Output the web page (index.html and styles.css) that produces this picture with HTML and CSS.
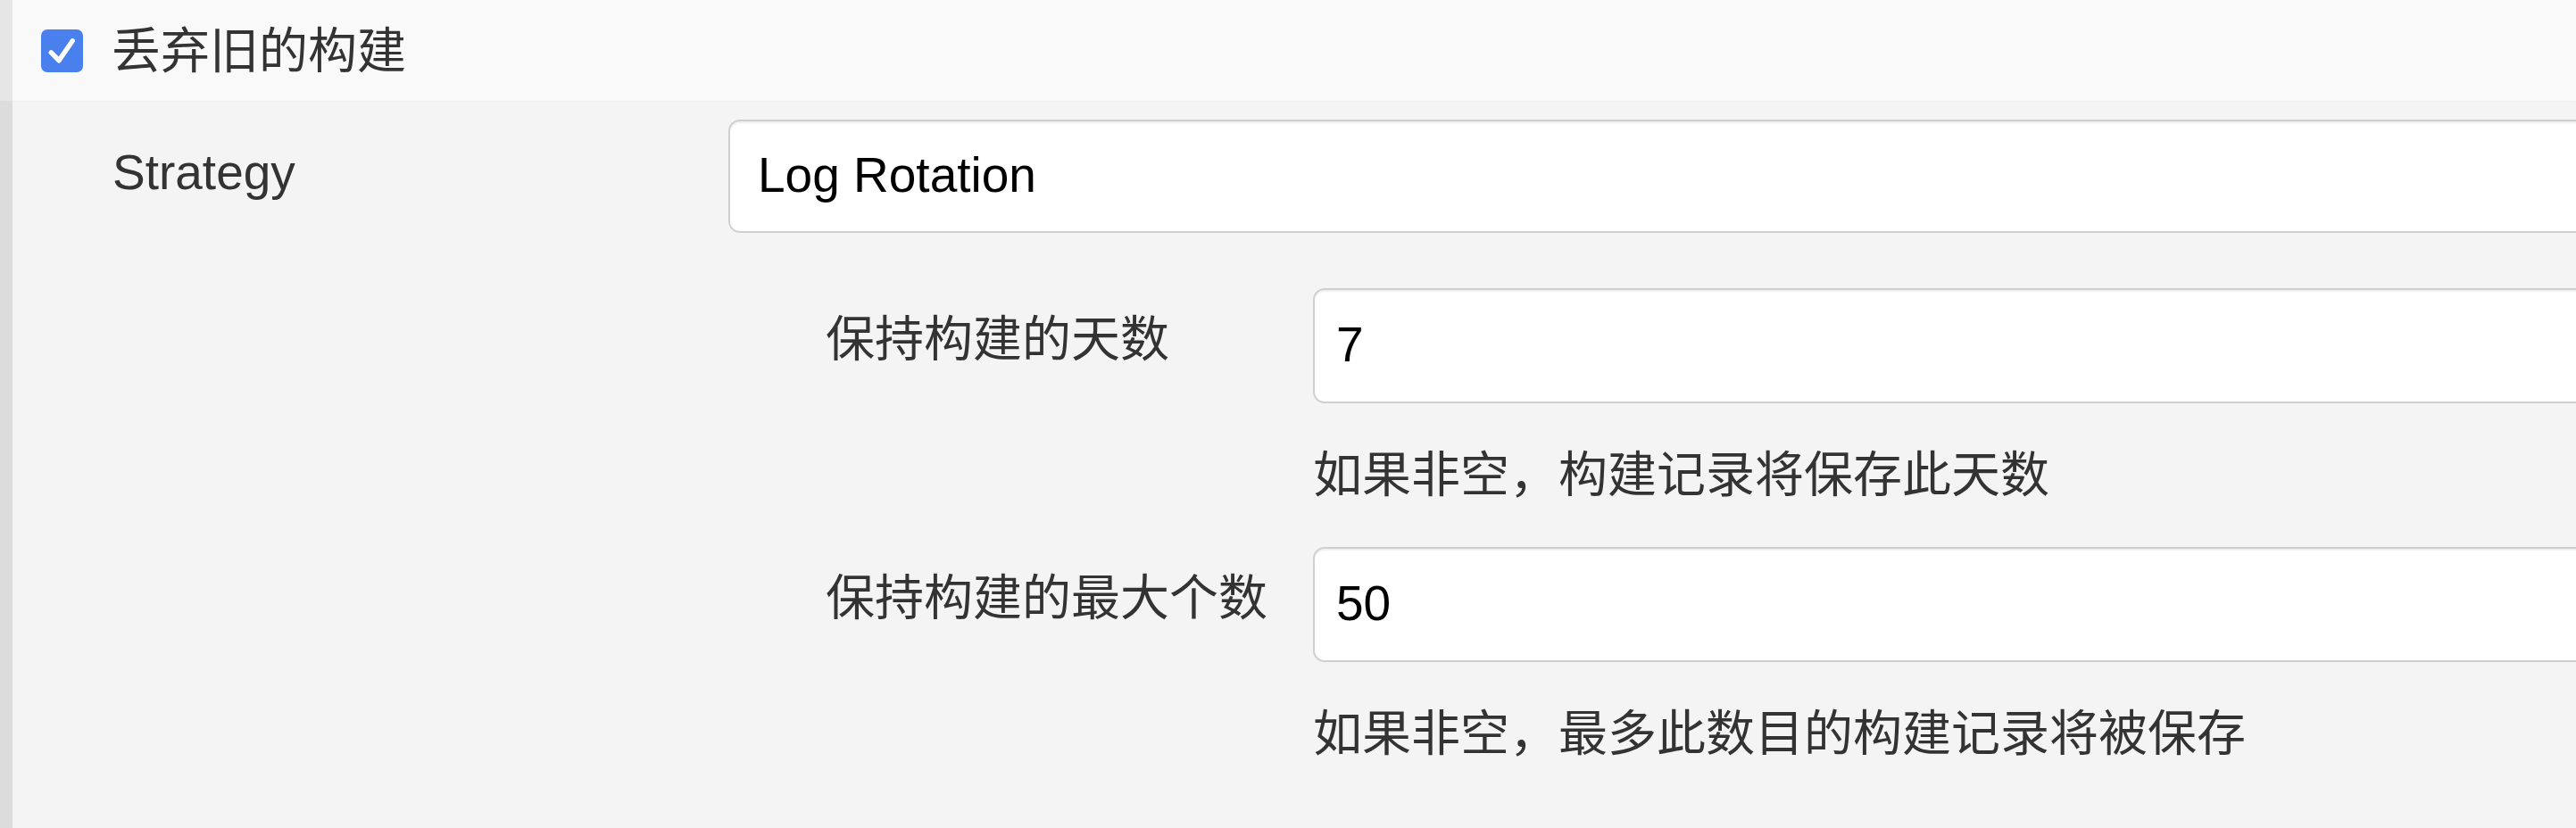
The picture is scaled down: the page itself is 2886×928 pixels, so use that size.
FILE: index.html
```html
<!DOCTYPE html>
<html lang="zh-CN">
<head>
<meta charset="utf-8">
<title>丢弃旧的构建</title>
<link rel="stylesheet" href="styles.css">
</head>
<body>
<div class="page">
  <div class="header">
    <span class="checkbox">
      <svg viewBox="0 0 48 48" width="47" height="48"><path d="M11.5 26 L20.5 35 L36 12.5" fill="none" stroke="#fff" stroke-width="5.5" stroke-linecap="round" stroke-linejoin="round"/></svg>
    </span>
    <span class="title">丢弃旧的构建</span>
  </div>
  <div class="body">
    <div class="row">
      <div class="label strategy">Strategy</div>
      <div class="select">Log Rotation</div>
    </div>
    <div class="nested">
      <div class="field">
        <div class="label sub">保持构建的天数</div>
        <div class="input">7</div>
      </div>
      <div class="help">如果非空，构建记录将保存此天数</div>
      <div class="field">
        <div class="label sub">保持构建的最大个数</div>
        <div class="input">50</div>
      </div>
      <div class="help">如果非空，最多此数目的构建记录将被保存</div>
    </div>
  </div>
</div>
</body>
</html>
```

FILE: styles.css
```css
html, body {
  margin: 0;
  padding: 0;
  width: 2886px;
  height: 928px;
  overflow: hidden;
  background: #f4f4f4;
}
.page {
  font-family: "Liberation Sans", "Noto Sans CJK SC", sans-serif;
  font-size: 55px;
  line-height: 66px;
  color: #333;
  width: 2886px;
  height: 928px;
  overflow: hidden;
}
.header {
  height: 113px;
  display: flex;
  align-items: center;
  background: #f9f9f9;
  border-left: 14px solid #e6e6e6;
  padding-left: 32px;
  box-shadow: 0 1px 2px rgba(0,0,0,0.03);
}
.checkbox {
  width: 47px;
  height: 48px;
  border-radius: 7px;
  background: #4a80ee;
  display: flex;
  align-items: center;
  justify-content: center;
  flex-shrink: 0;
}
.checkbox svg { display: block; }
.title {
  margin-left: 32px;
  color: #333;
  white-space: nowrap;
}
.body {
  border-left: 14px solid #dcdcdc;
  height: 815px;
  padding-left: 112px;
  padding-top: 21px;
  box-sizing: border-box;
}
.row {
  display: grid;
  grid-template-columns: 690px 2300px;
}
.label {
  white-space: nowrap;
  color: #333;
}
.strategy {
  padding-top: 26px;
}
.select, .input {
  box-sizing: border-box;
  background: #fff;
  border: 2px solid #cfcfcf;
  border-radius: 13px;
  box-shadow: inset 0 3px 2px -1px rgba(0,0,0,0.07);
  color: #000;
  display: flex;
  align-items: center;
  padding-left: 31px;
  padding-bottom: 4px;
}
.select {
  height: 127px;
}
.nested {
  padding-left: 799px;
  padding-top: 62px;
}
.field {
  display: grid;
  grid-template-columns: 546px 1500px;
}
.sub {
  padding-top: 24px;
}
.input {
  height: 129px;
  padding-left: 24px;
}
.help {
  margin-left: 546px;
  margin-top: 47px;
  margin-bottom: 48px;
  color: #333;
  white-space: nowrap;
}
```
